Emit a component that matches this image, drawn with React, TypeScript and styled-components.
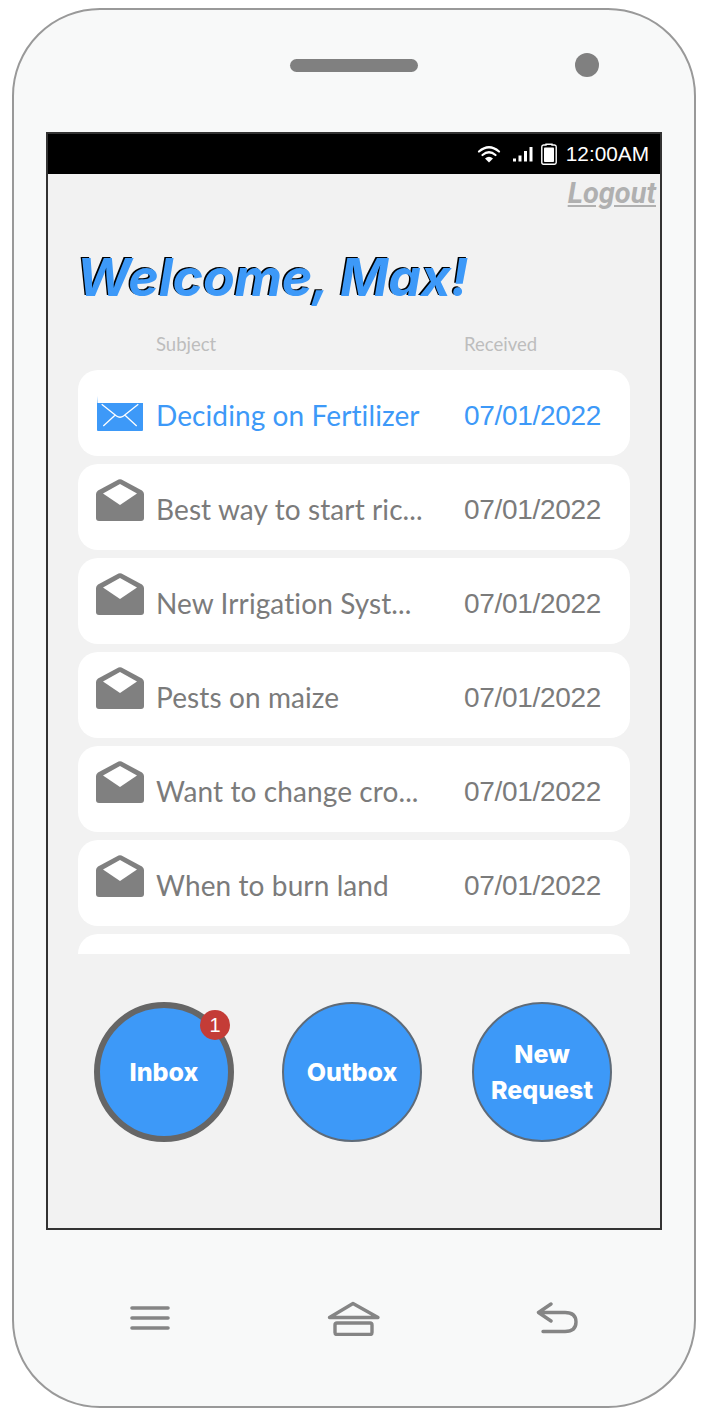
import styled, { createGlobalStyle } from "styled-components";

const GlobalStyle = createGlobalStyle`
  html, body {
    margin: 0;
    padding: 0;
    background: #ffffff;
  }
  * {
    box-sizing: border-box;
  }
`;

const Page = styled.div`
  width: 710px;
  height: 1420px;
  padding: 8px 0 0 12px;
  overflow: hidden;
`;

const Phone = styled.div`
  display: flex;
  flex-direction: column;
  width: 684px;
  height: 1400px;
  padding: 0 32px;
  background: #f8f9f9;
  border: 2px solid #999999;
  border-radius: 88px;
`;

const PhoneTop = styled.div`
  display: flex;
  align-items: center;
  height: 122px;
  padding: 0 0 12px 244px;
`;

const Speaker = styled.div`
  width: 128px;
  height: 13px;
  border-radius: 7px;
  background: #808080;
`;

const Camera = styled.div`
  width: 24px;
  height: 24px;
  margin-left: 157px;
  border-radius: 50%;
  background: #808080;
`;

const Screen = styled.div`
  display: flex;
  flex-direction: column;
  width: 616px;
  height: 1098px;
  background: #f2f2f2;
  border: 2px solid #333333;
`;

const StatusBar = styled.div`
  display: flex;
  align-items: center;
  justify-content: flex-end;
  height: 40px;
  padding-right: 11px;
  background: #000000;
  color: #ffffff;
  font-family: "Liberation Sans", Arial, sans-serif;
  font-size: 20.8px;
`;

const StatusIcon = styled.svg<{ $gap: number }>`
  display: block;
  margin-right: ${(p) => p.$gap}px;
`;

const LogoutRow = styled.div`
  display: flex;
  justify-content: flex-end;
  height: 36px;
  padding: 3px 4px 0 0;
`;

const Logout = styled.a`
  color: #b0b0b0;
  font-family: Roboto, sans-serif;
  font-size: 29px;
  font-style: italic;
  font-weight: 700;
  line-height: 32px;
  text-decoration: underline;
`;

const Title = styled.h1`
  margin: 34px 0 0 29px;
  color: #3d99f8;
  font-family: Inter, sans-serif;
  font-size: 52px;
  font-style: italic;
  font-weight: 700;
  line-height: 68px;
  letter-spacing: -0.2px;
  text-shadow: -1.5px -1.5px 0 #000000;
`;

const ColumnHeads = styled.div`
  display: grid;
  grid-template-columns: 308px auto;
  height: 22px;
  margin: 21px 0 15px 108px;
  color: #bdbdbd;
  font-family: Lato, sans-serif;
  font-size: 18.5px;
  line-height: 22px;
`;

const MessageList = styled.div`
  display: flex;
  flex-direction: column;
  gap: 8px;
  height: 584px;
  margin: 0 30px;
  overflow: hidden;
`;

const MessageRow = styled.div<{ $unread?: boolean }>`
  display: grid;
  flex: none;
  grid-template-columns: 48px 308px auto;
  align-items: center;
  height: 86px;
  padding-left: 18px;
  background: #ffffff;
  border-radius: 20px;
  color: ${(p) => (p.$unread ? "#3d99f8" : "#7b7b7b")};
  font-family: Lato, sans-serif;
  font-size: 28px;
  letter-spacing: 0.1px;
  white-space: nowrap;
`;

const Subject = styled.span`
  padding: 4px 0 0 12px;
`;

const ReceivedDate = styled.span`
  margin-left: 12px;
  padding-top: 5px;
  font-family: "Liberation Sans", Arial, sans-serif;
  letter-spacing: -0.3px;
`;

const EnvelopeIcon = styled.svg<{ $lift: number }>`
  display: block;
  margin-top: -${(p) => p.$lift}px;
`;

const Actions = styled.div`
  display: grid;
  grid-template-columns: 188px 190px 140px;
  margin: 48px 0 0 46px;
`;

const ActionButton = styled.button<{ $active?: boolean }>`
  position: relative;
  display: flex;
  align-items: center;
  justify-content: center;
  width: 140px;
  height: 140px;
  padding: 0;
  background: #3d99f8;
  border: ${(p) => (p.$active ? "6px solid #666666" : "2px solid #5f6b78")};
  border-radius: 50%;
  color: #ffffff;
  font-family: Inter, sans-serif;
  font-size: 25px;
  font-weight: 800;
  line-height: 36px;
`;

const Badge = styled.span`
  position: absolute;
  top: 2px;
  right: -2px;
  width: 30px;
  height: 30px;
  background: #c43c37;
  border-radius: 50%;
  font-family: "Liberation Sans", Arial, sans-serif;
  font-size: 20px;
  font-weight: 400;
  line-height: 30px;
`;

const NavBar = styled.div`
  display: flex;
  flex: 1;
  align-items: center;
  justify-content: space-between;
  padding: 0 83px 0 82px;
`;

const NavIcon = styled.svg`
  display: block;
  fill: none;
  stroke: #858585;
  stroke-linecap: round;
  stroke-linejoin: round;
`;

const messages = [
  { subject: "Deciding on Fertilizer", unread: true },
  { subject: "Best way to start ric..." },
  { subject: "New Irrigation Syst..." },
  { subject: "Pests on maize" },
  { subject: "Want to change cro..." },
  { subject: "When to burn land" },
];

const ClosedEnvelope = () => (
  <EnvelopeIcon $lift={0} width="48" height="35" viewBox="0 0 48 35">
    <path
      d="M1 0V34a1 1 0 0 0 1 1H46a1 1 0 0 0 1-1V7H1.5z"
      fill="#3d99f8"
    />
    <path
      d="M5.7 8.3L20.5 20Q24 22.5 27.5 20L42.3 8.3M7.3 30L19 19.3M40.7 30L29 19.3"
      fill="none"
      stroke="#ffffff"
      strokeWidth="1.3"
    />
  </EnvelopeIcon>
);

const OpenEnvelope = () => (
  <EnvelopeIcon $lift={14} width="48" height="42" viewBox="0 0 48 42">
    <path
      d="M22.5 0.5Q24 0 25.5 0.5L46 11.5Q48 13 48 15V39Q48 42 45 42H3Q0 42 0 39V15Q0 13 2 11.5z"
      fill="#808080"
    />
    <path d="M24 5L41 14.5L24 26L7 14.5z" fill="#ffffff" />
  </EnvelopeIcon>
);

const WifiIcon = () => (
  <StatusIcon $gap={11} width="24" height="20" viewBox="0 0 24 20">
    <path
      d="M2 7.5Q12 -1 22 7.5M5.5 11Q12 5.5 18.5 11"
      fill="none"
      stroke="#ffffff"
      strokeWidth="2.2"
      strokeLinecap="round"
    />
    <path d="M8 14.5Q12 11 16 14.5L12 18.5z" fill="#ffffff" />
  </StatusIcon>
);

const SignalIcon = () => (
  <StatusIcon $gap={8} width="21" height="16" viewBox="0 0 21 16">
    <rect x="1" y="12.5" width="3" height="3" fill="#ffffff" />
    <rect x="6.5" y="9.5" width="3" height="6" fill="#ffffff" />
    <rect x="12" y="5" width="3" height="10.5" fill="#ffffff" />
    <rect x="17.5" y="1" width="3" height="14.5" fill="#ffffff" />
  </StatusIcon>
);

const BatteryIcon = () => (
  <StatusIcon $gap={9} width="16" height="22" viewBox="0 0 16 22">
    <path
      d="M5 2V1.2H11V2H13.5Q15.2 2 15.2 3.8V19.5Q15.2 21.2 13.5 21.2H2.5Q0.8 21.2 0.8 19.5V3.8Q0.8 2 2.5 2z"
      fill="none"
      stroke="#ffffff"
      strokeWidth="1.4"
    />
    <rect x="3" y="4.5" width="10" height="14.5" rx="0.8" fill="#ffffff" />
  </StatusIcon>
);

const MenuIcon = () => (
  <NavIcon width="44" height="26" viewBox="0 0 44 26" strokeWidth="3.6">
    <path d="M4 3H40M4 13H40M4 23H40" />
  </NavIcon>
);

const HomeIcon = () => (
  <NavIcon width="54" height="35" viewBox="0 0 54 35" strokeWidth="3.4">
    <path d="M2.5 16.5L26 2.5L51 16.5z" />
    <rect x="8" y="22" width="37" height="11.5" rx="2" />
  </NavIcon>
);

const BackIcon = () => (
  <NavIcon width="44" height="32" viewBox="0 0 44 32" strokeWidth="3.4">
    <path d="M16 2L3.5 10.5L16 19M4 10.5H30Q41 10.5 41 20Q41 29.5 30 29.5H8" />
  </NavIcon>
);

const App = () => {
  return (
    <Page>
      <GlobalStyle />
      <Phone>
        <PhoneTop>
          <Speaker />
          <Camera />
        </PhoneTop>
        <Screen>
          <StatusBar>
            <WifiIcon />
            <SignalIcon />
            <BatteryIcon />
            12:00AM
          </StatusBar>
          <LogoutRow>
            <Logout>Logout</Logout>
          </LogoutRow>
          <Title>Welcome, Max!</Title>
          <ColumnHeads>
            <span>Subject</span>
            <span>Received</span>
          </ColumnHeads>
          <MessageList>
            {messages.map((message) => (
              <MessageRow key={message.subject} $unread={message.unread}>
                {message.unread ? <ClosedEnvelope /> : <OpenEnvelope />}
                <Subject>{message.subject}</Subject>
                <ReceivedDate>07/01/2022</ReceivedDate>
              </MessageRow>
            ))}
            <MessageRow />
          </MessageList>
          <Actions>
            <ActionButton $active>
              Inbox
              <Badge>1</Badge>
            </ActionButton>
            <ActionButton>Outbox</ActionButton>
            <ActionButton>
              New
              <br />
              Request
            </ActionButton>
          </Actions>
        </Screen>
        <NavBar>
          <MenuIcon />
          <HomeIcon />
          <BackIcon />
        </NavBar>
      </Phone>
    </Page>
  );
};

export default App;
